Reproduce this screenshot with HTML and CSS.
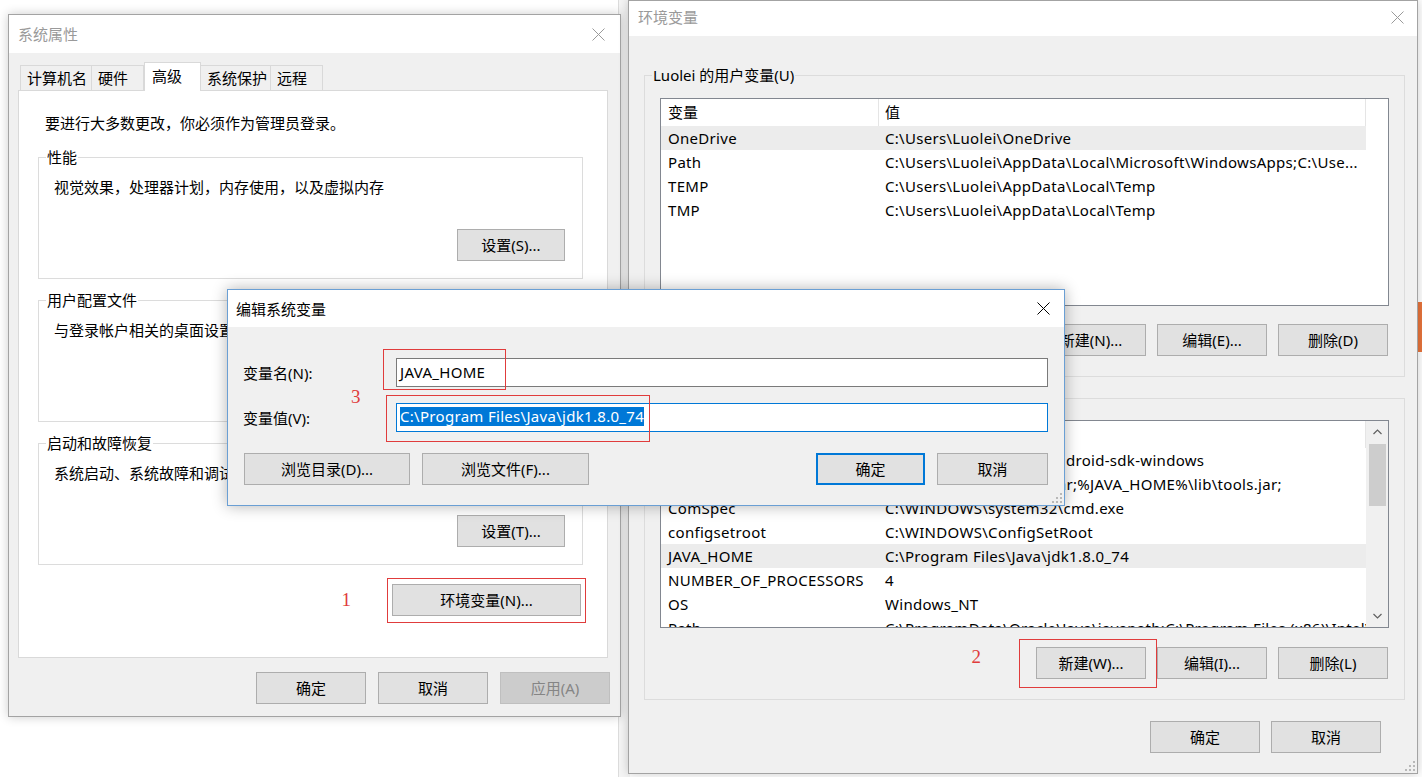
FILE: index.html
```html
<!DOCTYPE html>
<html lang="zh-CN">
<head>
<meta charset="utf-8">
<title>环境变量</title>
<link rel="stylesheet" href="styles.css">
</head>
<body>
<div class="desktop">
  <div class="bg-strip"></div>
  <div class="bg-orange"></div>

  <!-- 系统属性 -->
  <div class="win sys">
    <div class="titlebar">
      <span class="title">系统属性</span>
      <svg class="close" viewBox="0 0 13 13"><line x1="0.5" y1="0.5" x2="12.5" y2="12.5"/><line x1="12.5" y1="0.5" x2="0.5" y2="12.5"/></svg>
    </div>
    <div class="body">
      <div class="tabs">
        <div class="tab w72">计算机名</div>
        <div class="tab w52">硬件</div>
        <div class="tab active">高级</div>
        <div class="tab w70">系统保护</div>
        <div class="tab w52">远程</div>
      </div>
      <div class="panel">
        <div class="intro">要进行大多数更改，你必须作为管理员登录。</div>
        <div class="group first">
          <span class="legend">性能</span>
          <div>视觉效果，处理器计划，内存使用，以及虚拟内存</div>
          <div class="row-end"><button class="btn w108">设置(S)...</button></div>
        </div>
        <div class="group">
          <span class="legend">用户配置文件</span>
          <div>与登录帐户相关的桌面设置</div>
          <div class="row-end"><button class="btn w108">设置(E)...</button></div>
        </div>
        <div class="group">
          <span class="legend">启动和故障恢复</span>
          <div>系统启动、系统故障和调试信息</div>
          <div class="row-end"><button class="btn w108">设置(T)...</button></div>
        </div>
        <div class="env-row">
          <span class="num">1</span>
          <span class="mark mark-env"><button class="btn w189">环境变量(N)...</button></span>
        </div>
      </div>
      <div class="footer">
        <button class="btn">确定</button>
        <button class="btn">取消</button>
        <button class="btn disabled">应用(A)</button>
      </div>
    </div>
  </div>

  <!-- 环境变量 -->
  <div class="win env">
    <div class="titlebar">
      <span class="title">环境变量</span>
      <svg class="close" viewBox="0 0 13 13"><line x1="0.5" y1="0.5" x2="12.5" y2="12.5"/><line x1="12.5" y1="0.5" x2="0.5" y2="12.5"/></svg>
    </div>
    <div class="body">
      <div class="group egroup">
        <span class="legend">Luolei 的用户变量(U)</span>
        <div class="list">
          <div class="lhead"><div class="c1">变量</div><div class="c2">值</div></div>
          <div class="lrow sel"><div class="c1">OneDrive</div><div class="c2">C:\Users\Luolei\OneDrive</div></div>
          <div class="lrow"><div class="c1">Path</div><div class="c2">C:\Users\Luolei\AppData\Local\Microsoft\WindowsApps;C:\Use...</div></div>
          <div class="lrow"><div class="c1">TEMP</div><div class="c2">C:\Users\Luolei\AppData\Local\Temp</div></div>
          <div class="lrow"><div class="c1">TMP</div><div class="c2">C:\Users\Luolei\AppData\Local\Temp</div></div>
        </div>
        <div class="btnrow first-row">
          <button class="btn">新建(N)...</button>
          <button class="btn">编辑(E)...</button>
          <button class="btn">删除(D)</button>
        </div>
      </div>
      <div class="group egroup second">
        <span class="legend">系统变量(S)</span>
        <div class="list slist">
          <div class="lbody">
            <div class="lhead"><div class="c1">变量</div><div class="c2">值</div></div>
            <div class="lrow"><div class="c1">ANDROID_HOME</div><div class="c2">D:\Programs\Android\android-sdk-windows</div></div>
            <div class="lrow"><div class="c1">CLASSPATH</div><div class="c2">.;%JAVA_HOME%\lib\dt.jar;%JAVA_HOME%\lib\tools.jar;</div></div>
            <div class="lrow"><div class="c1">ComSpec</div><div class="c2">C:\WINDOWS\system32\cmd.exe</div></div>
            <div class="lrow"><div class="c1">configsetroot</div><div class="c2">C:\WINDOWS\ConfigSetRoot</div></div>
            <div class="lrow sel"><div class="c1">JAVA_HOME</div><div class="c2">C:\Program Files\Java\jdk1.8.0_74</div></div>
            <div class="lrow"><div class="c1">NUMBER_OF_PROCESSORS</div><div class="c2">4</div></div>
            <div class="lrow"><div class="c1">OS</div><div class="c2">Windows_NT</div></div>
            <div class="lrow"><div class="c1">Path</div><div class="c2">C:\ProgramData\Oracle\Java\javapath;C:\Program Files (x86)\Intel\iCLS Client\</div></div>
          </div>
          <div class="scrollbar">
            <div class="sarrow"><svg viewBox="0 0 9 6" width="9" height="6"><polyline points="0.5,5 4.5,1 8.5,5"/></svg></div>
            <div class="thumb"></div>
            <div class="strack"></div>
            <div class="sarrow"><svg viewBox="0 0 9 6" width="9" height="6"><polyline points="0.5,1 4.5,5 8.5,1"/></svg></div>
          </div>
        </div>
        <div class="btnrow">
          <span class="num num2">2</span>
          <span class="mark mark-new"><button class="btn">新建(W)...</button></span>
          <button class="btn">编辑(I)...</button>
          <button class="btn">删除(L)</button>
        </div>
      </div>
      <div class="footer">
        <button class="btn">确定</button>
        <button class="btn">取消</button>
      </div>
    </div>
    <svg class="grip" viewBox="0 0 10 10" width="10" height="10"><rect x="8" y="0" width="2" height="2"/><rect x="4" y="4" width="2" height="2"/><rect x="8" y="4" width="2" height="2"/><rect x="0" y="8" width="2" height="2"/><rect x="4" y="8" width="2" height="2"/><rect x="8" y="8" width="2" height="2"/></svg>
  </div>

  <!-- 编辑系统变量 -->
  <div class="win edit">
    <div class="titlebar">
      <span class="title">编辑系统变量</span>
      <svg class="close" viewBox="0 0 13 13"><line x1="0.5" y1="0.5" x2="12.5" y2="12.5"/><line x1="12.5" y1="0.5" x2="0.5" y2="12.5"/></svg>
    </div>
    <div class="body">
      <div class="field">
        <label>变量名(N):</label>
        <div class="input">JAVA_HOME</div>
      </div>
      <div class="field">
        <label>变量值(V):</label>
        <div class="input focus"><span class="selected">C:\Program Files\Java\jdk1.8.0_74</span></div>
      </div>
      <div class="dlg-btns">
        <button class="btn w166">浏览目录(D)...</button>
        <button class="btn w167">浏览文件(F)...</button>
        <button class="btn w109 default">确定</button>
        <button class="btn w111">取消</button>
      </div>
      <div class="anno-box box1"></div>
      <div class="anno-box box2"></div>
      <span class="num num3">3</span>
    </div>
    <svg class="grip" viewBox="0 0 10 10" width="10" height="10"><rect x="8" y="0" width="2" height="2"/><rect x="4" y="4" width="2" height="2"/><rect x="8" y="4" width="2" height="2"/><rect x="0" y="8" width="2" height="2"/><rect x="4" y="8" width="2" height="2"/><rect x="8" y="8" width="2" height="2"/></svg>
  </div>
</div>
</body>
</html>
```

FILE: styles.css
```css
* { box-sizing: border-box; }
html, body { margin: 0; padding: 0; }
body {
  font-family: "Noto Sans", "Noto Sans CJK SC", sans-serif;
  font-size: 15px;
  line-height: 20px;
  color: #000;
  background: #fff;
}
.desktop {
  position: relative;
  width: 1422px;
  height: 777px;
  overflow: hidden;
  background: #fff;
}
.bg-strip {
  position: absolute;
  left: 618px;
  top: 0;
  width: 12px;
  height: 777px;
  background: #f5f5f5;
  border-left: 1px solid #dcdcdc;
}
.bg-orange {
  position: absolute;
  left: 1417px;
  top: 302px;
  width: 5px;
  height: 50px;
  background: #e8743b;
}

/* generic window */
.win {
  position: absolute;
  display: flex;
  flex-direction: column;
  border: 1px solid #a3a3a3;
  background: #f0f0f0;
  box-shadow: 0 0 10px rgba(0, 0, 0, 0.2);
}
.titlebar {
  flex: none;
  display: flex;
  align-items: center;
  justify-content: space-between;
  background: #fff;
}
.title { color: #9a9a9a; }
.close { display: block; width: 13px; height: 13px; }
.close line { stroke: #9a9a9a; stroke-width: 1; }

.btn {
  flex: none;
  display: flex;
  align-items: center;
  justify-content: center;
  width: 110px;
  height: 32px;
  padding: 0;
  border: 1px solid #adadad;
  background: #e1e1e1;
  font: inherit;
  color: #000;
}
.btn.disabled { background: #cccccc; border-color: #bfbfbf; color: #858585; }
.btn.default { border: 2px solid #0078d7; }
.w108 { width: 108px; }
.w189 { width: 189px; }
.w166 { width: 166px; }
.w167 { width: 167px; }
.w109 { width: 109px; }
.w111 { width: 111px; }

.num {
  font-family: "Liberation Serif", serif;
  font-size: 19px;
  line-height: 20px;
  color: #e03c3c;
}
.mark { position: relative; display: inline-flex; }
.mark::after {
  content: "";
  position: absolute;
  border: 1px solid #e03c3c;
}

/* 系统属性 */
.sys { left: 8px; top: 14px; width: 613px; height: 703px; }
.sys .titlebar { height: 38px; padding: 0 15px 0 9px; }
.sys .body { padding: 9px 10px 0 9px; }
.tabs {
  position: relative;
  z-index: 1;
  display: flex;
  align-items: flex-end;
  height: 28px;
  padding-left: 2px;
}
.tab {
  height: 25px;
  line-height: 25px;
  padding-left: 6px;
  border: 1px solid #d9d9d9;
  border-bottom: none;
  background: #f0f0f0;
}
.tab + .tab { border-left: none; }
.tab.active {
  width: 57px;
  height: 29px;
  line-height: 27px;
  padding-left: 7px;
  margin-bottom: -1px;
  border-left: 1px solid #d9d9d9;
  background: #fff;
}
.tab.active + .tab { border-left: none; }
.w72 { width: 72px; }
.w52 { width: 52px; }
.w70 { width: 70px; }
.panel {
  width: 590px;
  height: 568px;
  background: #fff;
  border: 1px solid #d9d9d9;
  padding: 22px 0 0 19px;
}
.intro { margin-left: 7px; }
.group {
  position: relative;
  width: 545px;
  height: 122px;
  margin-top: 21px;
  padding: 19px 17px 0 15px;
  border: 1px solid #dcdcdc;
}
.group.first { margin-top: 24px; }
.legend {
  position: absolute;
  top: -11px;
  left: 7px;
  padding: 0 1px;
  background: #fff;
  white-space: nowrap;
}
.row-end { display: flex; justify-content: flex-end; margin-top: 32px; }
.env-row {
  display: flex;
  justify-content: flex-end;
  align-items: center;
  margin-top: 19px;
  padding-right: 26px;
}
.env-row .num { margin-right: 41px; }
.mark-env::after { top: -6px; bottom: -7px; left: -5px; right: -5px; }
.sys .footer {
  display: flex;
  justify-content: flex-end;
  gap: 12px;
  margin-top: 14px;
}

/* 环境变量 */
.env { left: 628px; top: 0; width: 790px; height: 774px; }
.env .titlebar { height: 35px; padding: 0 13px 3px 9px; }
.env .body { padding: 39px 0 0 15px; }
.egroup {
  width: 761px;
  height: 302px;
  margin-top: 0;
  padding: 22px 0 0 15px;
}
.egroup .legend { background: #f0f0f0; left: 7px; }
.egroup.second { margin-top: 21px; padding-top: 21px; }
.list {
  width: 729px;
  height: 208px;
  border: 1px solid #828790;
  background: #fff;
  overflow: hidden;
}
.slist { display: flex; }
.lbody { width: 705px; flex: none; overflow: hidden; }
.lhead { display: flex; height: 27px; line-height: 27px; width: 705px; }
.lhead .c1 { width: 218px; padding-left: 7px; border-right: 1px solid #e5e5e5; }
.lhead .c2 { width: 487px; padding-left: 6px; border-right: 1px solid #e5e5e5; }
.lrow {
  display: flex;
  height: 24px;
  line-height: 24px;
  width: 705px;
  white-space: nowrap;
  letter-spacing: 0.3px;
}
.lrow .c1 { width: 218px; flex: none; padding-left: 7px; overflow: hidden; }
.lrow .c2 { width: 487px; flex: none; padding-left: 6px; overflow: hidden; }
.lrow.sel { background: #ececec; }
.scrollbar {
  width: 22px;
  flex: none;
  display: flex;
  flex-direction: column;
  align-items: center;
  background: #f0f0f0;
}
.sarrow {
  height: 22px;
  width: 22px;
  display: flex;
  align-items: center;
  justify-content: center;
}
.sarrow polyline { fill: none; stroke: #606060; stroke-width: 1.2; }
.thumb { width: 17px; height: 62px; margin-top: 1px; background: #cdcdcd; }
.strack { flex: 1; }
.btnrow {
  display: flex;
  justify-content: flex-end;
  align-items: flex-start;
  gap: 11px;
  margin-top: 19px;
  padding-right: 16px;
}
.btnrow.first-row { margin-top: 18px; }
.num2 { margin-right: 44px; }
.mark-new::after { top: -8px; bottom: -9px; left: -17px; right: -11px; }
.env .footer {
  display: flex;
  justify-content: flex-end;
  gap: 11px;
  margin-top: 21px;
  padding-right: 36px;
}
.grip { position: absolute; right: 2px; bottom: 2px; }
.grip rect { fill: #b8b8b8; }

/* 编辑系统变量 */
.edit {
  left: 227px;
  top: 289px;
  width: 838px;
  height: 217px;
  border-color: #6a9fd4;
  box-shadow: 0 0 14px rgba(0, 0, 0, 0.3);
}
.edit .titlebar { height: 37px; padding: 0 14px 0 8px; }
.edit .title { color: #000; }
.edit .close line { stroke: #000; }
.edit .body { position: relative; flex: 1; padding: 31px 16px 0 15px; }
.field { display: flex; align-items: center; }
.field + .field { margin-top: 16px; }
.field label { width: 153px; }
.input {
  width: 652px;
  height: 29px;
  padding: 0 0 2px 3px;
  display: flex;
  align-items: center;
  border: 1px solid #7a7a7a;
  background: #fff;
  white-space: nowrap;
  letter-spacing: 0.3px;
}
.input.focus { border-color: #0078d7; }
.selected { background: #0078d7; color: #fff; line-height: 19px; }
.dlg-btns { display: flex; margin-top: 21px; padding-left: 1px; }
.dlg-btns .w167 { margin-left: 12px; }
.dlg-btns .w109 { margin-left: auto; }
.dlg-btns .w111 { margin-left: 12px; }
.anno-box {
  position: absolute;
  z-index: 2;
  border: 0;
  outline: 1px solid #e03c3c;
  outline-offset: -1px;
}
.box1 { left: 155px; top: 22px; width: 123px; height: 41px; }
.box2 { left: 158px; top: 68px; width: 264px; height: 47px; }
.num3 { position: absolute; left: 123px; top: 60px; }
```
